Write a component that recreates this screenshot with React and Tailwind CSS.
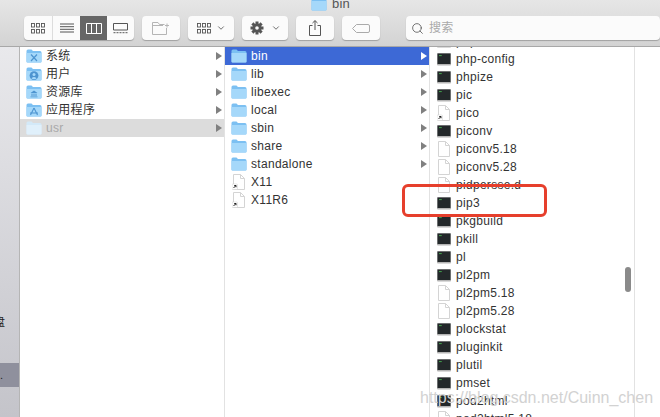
import { ChevronDown, Search } from "lucide-react";

const FONT = "font-['Liberation_Sans','Noto_Sans_CJK_SC',sans-serif]";

function Folder({ light, badge }) {
  const a = light ? "#d3e9f8" : "#7cc0f2";
  const b = light ? "#e0f0fb" : "#a5d8fa";
  return (
    <svg width="16" height="14" viewBox="0 0 16 14" className="shrink-0">
      <path d="M0.5 2 Q0.5 0.5 2 0.5 H5.5 L7 2 H14 Q15.5 2 15.5 3.5 V12.5 Q15.5 13.5 14.5 13.5 H1.5 Q0.5 13.5 0.5 12.5 Z" fill={a} />
      <path d="M0.5 4 H15.5 V12.5 Q15.5 13.5 14.5 13.5 H1.5 Q0.5 13.5 0.5 12.5 Z" fill={b} />
      {badge === "x" && <path d="M5 5.5 L11 12 M11 5.5 L5 12" stroke="#4d94d0" strokeWidth="1.2" />}
      {badge === "user" && (
        <g fill="#4d94d0">
          <circle cx="8" cy="8.6" r="4.4" />
          <circle cx="8" cy="7.4" r="1.5" fill={b} />
          <path d="M5.4 11.4 Q8 8.6 10.6 11.4 Q8 13 5.4 11.4Z" fill={b} />
        </g>
      )}
      {badge === "lib" && <path d="M4.5 8 L8 5.5 L11.5 8 Z M5.5 8.6 H6.5 V11 H5.5 Z M7.5 8.6 H8.5 V11 H7.5 Z M9.5 8.6 H10.5 V11 H9.5 Z M4.5 11.4 H11.5 V12.2 H4.5 Z" fill="#4d94d0" />}
      {badge === "app" && <path d="M8 5 L4.5 12 M8 5 L11.5 12 M4 10 H12" stroke="#4d94d0" strokeWidth="1.1" fill="none" />}
    </svg>
  );
}

function Term() {
  return (
    <svg width="14" height="14" viewBox="0 0 14 14" className="shrink-0">
      <rect x="0" y="1" width="14" height="12.5" rx="1" fill="#b4b4b4" />
      <rect x="0.5" y="1.5" width="13" height="10.5" fill="#23282a" />
      <path d="M2 3.6 H5" stroke="#4fd35a" strokeWidth="0.9" strokeDasharray="0.8 0.4" />
    </svg>
  );
}

function Doc({ alias }) {
  return (
    <svg width="14" height="16" viewBox="0 0 14 16" className="shrink-0">
      <path d="M1.5 0.5 H8.5 L12.5 4.5 V15.5 H1.5 Z" fill="#fff" stroke="#d4d4d4" />
      <path d="M8.5 0.5 V4.5 H12.5" fill="none" stroke="#d4d4d4" />
      {alias && (
        <g>
          <rect x="0" y="10" width="5.5" height="5.5" rx="0.8" fill="#fff" stroke="#ccc" strokeWidth="0.5" />
          <path d="M1.5 14 L3.8 11.7 M2.2 11.5 H4 V13.3" stroke="#111" strokeWidth="0.9" fill="none" />
        </g>
      )}
    </svg>
  );
}

function Arrow({ white }) {
  return (
    <svg width="6" height="8" viewBox="0 0 6 8" className="shrink-0">
      <path d="M0 0 L6 4 L0 8 Z" fill={white ? "#fff" : "#808080"} />
    </svg>
  );
}

function ToolBtn({ className, children }) {
  return (
    <div className={`h-[24px] flex items-center justify-center rounded-[4px] bg-[#fbfbfb] shadow-[0_1px_1px_rgba(0,0,0,0.25)] ${className}`}>
      {children}
    </div>
  );
}

function GridIcon({ color = "#555" }) {
  return (
    <svg width="14" height="11" viewBox="0 0 14 11">
      <g fill="none" stroke={color} strokeWidth="0.9">
        {[0.5, 5.5, 10.5].map((x) => (
          <g key={x}>
            <rect x={x} y="0.5" width="3" height="3.5" />
            <rect x={x} y="6.5" width="3" height="3.5" />
          </g>
        ))}
      </g>
    </svg>
  );
}

const col1 = [
  { name: "系统", badge: "x" },
  { name: "用户", badge: "user" },
  { name: "资源库", badge: "lib" },
  { name: "应用程序", badge: "app" },
];

const col2 = ["lib", "libexec", "local", "sbin", "share", "standalone"];

const col3 = [
  ["php", "term"],
  ["php-config", "term"],
  ["phpize", "term"],
  ["pic", "term"],
  ["pico", "alias"],
  ["piconv", "term"],
  ["piconv5.18", "doc"],
  ["piconv5.28", "doc"],
  ["pidpersse.d", "doc"],
  ["pip3", "term"],
  ["pkgbuild", "term"],
  ["pkill", "term"],
  ["pl", "term"],
  ["pl2pm", "term"],
  ["pl2pm5.18", "doc"],
  ["pl2pm5.28", "doc"],
  ["plockstat", "term"],
  ["pluginkit", "term"],
  ["plutil", "term"],
  ["pmset", "term"],
  ["pod2html", "term"],
  ["pod2html5.18", "doc"],
];

export default function App() {
  return (
    <div className={`relative w-[660px] h-[417px] overflow-hidden bg-white text-[12px] tracking-[0.3px] text-[#333] ${FONT}`}>
      {/* Toolbar */}
      <header className="h-[47px] border-b border-[#a8a8a8] bg-gradient-to-b from-[#e6e6e6] to-[#d3d3d3]">
        <div className="h-[16px] flex justify-center items-center gap-[5px] pl-[1px] -translate-y-[4px] text-[13px] text-[#555]">
          <Folder />
          <span>bin</span>
        </div>
        <div className="flex items-center pl-[24px]">
          <ToolBtn className="w-[110px] overflow-hidden">
            <div className="w-[29px] h-full flex items-center justify-center border-r border-[#ddd]"><GridIcon /></div>
            <div className="w-[27px] h-full flex items-center justify-center">
              <svg width="14" height="10" viewBox="0 0 14 10"><path d="M0 1 H14 M0 3.7 H14 M0 6.3 H14 M0 9 H14" stroke="#555" /></svg>
            </div>
            <div className="w-[27px] h-full flex items-center justify-center bg-[#666]">
              <svg width="16" height="11" viewBox="0 0 16 11"><path d="M0.5 0.5 H15.5 V10.5 H0.5 Z M5.5 0.5 V10.5 M10.5 0.5 V10.5" stroke="#fff" fill="none" /></svg>
            </div>
            <div className="w-[27px] h-full flex items-center justify-center">
              <svg width="15" height="11" viewBox="0 0 15 11"><path d="M0.5 0.5 H14.5 V7 H0.5 Z" stroke="#555" fill="none" /><path d="M0.5 9.7 H14.5" stroke="#555" strokeDasharray="2 1" /></svg>
            </div>
          </ToolBtn>
          <ToolBtn className="w-[38px] ml-[8px]">
            <svg width="18" height="13" viewBox="0 0 18 13"><path d="M0.5 12.5 V0.5 H6 L7.5 2.5 H12.5 M0.5 12.5 H14.5 V6 M0.5 3.5 H11 M13 3.5 H17 M15 1.5 V5.5" stroke="#b5b5b5" fill="none" /></svg>
          </ToolBtn>
          <ToolBtn className="w-[46px] ml-[8px] gap-[5px]">
            <GridIcon />
            <ChevronDown size={10} strokeWidth={2} color="#555" />
          </ToolBtn>
          <ToolBtn className="w-[46px] ml-[8px] gap-[7px]">
            <svg width="14" height="14" viewBox="0 0 14 14">
              <g fill="#555">
                {[0, 45, 90, 135].map((r) => (
                  <rect key={r} x="5.5" y="0.5" width="3" height="13" transform={`rotate(${r} 7 7)`} />
                ))}
              </g>
              <circle cx="7" cy="7" r="4.6" fill="#555" />
              <circle cx="7" cy="7" r="1.8" fill="#fbfbfb" />
            </svg>
            <ChevronDown size={10} strokeWidth={2} color="#555" />
          </ToolBtn>
          <ToolBtn className="w-[38px] ml-[8px]">
            <svg width="12" height="16" viewBox="0 0 12 16"><path d="M3.5 5.5 H0.5 V15.5 H11.5 V5.5 H8.5 M6 10 V0.8 M3.5 3 L6 0.6 L8.5 3" stroke="#555" fill="none" /></svg>
          </ToolBtn>
          <ToolBtn className="w-[38px] ml-[8px]">
            <svg width="18" height="9" viewBox="0 0 18 9"><path d="M4.5 0.5 H16 Q17.5 0.5 17.5 2 V7 Q17.5 8.5 16 8.5 H4.5 L0.5 4.5 Z" stroke="#aaa" fill="none" /></svg>
          </ToolBtn>
          <ToolBtn className="flex-1 ml-[26px] !justify-start pl-[5px] gap-[5px] text-[#aaa] text-[12px]">
            <Search size={13} strokeWidth={1.5} color="#555" />
            <span>搜索</span>
          </ToolBtn>
        </div>
      </header>

      <div className="flex h-[370px]">
        {/* Sidebar */}
        <aside className="w-[20px] shrink-0 flex flex-col border-r border-[#b5b5b5] bg-gradient-to-b from-[#e9e9ec] to-[#c4c4ca] text-[11px] text-[#222]">
          <div className="h-[316px] flex items-end pb-[34px] overflow-hidden">
            <span className="shrink-0 leading-[14px] -ml-[6px]">盘</span>
          </div>
          <div className="h-[24px] bg-[#8f909d] flex items-center pl-[0px] leading-none">.</div>
        </aside>

        {/* usr parent column */}
        <section className="w-[205px] shrink-0 border-r border-[#e2e2e2]">
          {col1.map((r) => (
            <div key={r.name} className="h-[18px] flex items-center pl-[6px] pr-[2px] gap-[4px]">
              <Folder badge={r.badge} />
              <span className="flex-1">{r.name}</span>
              <Arrow />
            </div>
          ))}
          <div className="h-[18px] flex items-center pl-[6px] pr-[2px] gap-[4px] bg-[#dcdcdc] text-[#a9a9a9]">
            <Folder light />
            <span className="flex-1">usr</span>
            <Arrow />
          </div>
        </section>

        {/* usr contents */}
        <section className="w-[205px] shrink-0 border-r border-[#e2e2e2]">
          <div className="h-[18px] flex items-center pl-[6px] pr-[2px] gap-[4px] bg-[#3d69d6] text-white">
            <Folder />
            <span className="flex-1">bin</span>
            <Arrow white />
          </div>
          {col2.map((n) => (
            <div key={n} className="h-[18px] flex items-center pl-[6px] pr-[2px] gap-[4px]">
              <Folder />
              <span className="flex-1">{n}</span>
              <Arrow />
            </div>
          ))}
          {["X11", "X11R6"].map((n) => (
            <div key={n} className="h-[18px] flex items-center pl-[7px] gap-[5px]">
              <Doc alias />
              <span>{n}</span>
            </div>
          ))}
        </section>

        {/* bin contents */}
        <section className="relative w-[205px] shrink-0 border-r border-[#e2e2e2] overflow-hidden">
          <div className="-mt-[15px]">
            {col3.map(([n, kind]) => (
              <div key={n} className="h-[18px] flex items-center pl-[7px] gap-[5px]">
                {kind === "term" ? <Term /> : <Doc alias={kind === "alias"} />}
                <span>{n}</span>
              </div>
            ))}
          </div>
          <div className="absolute left-[195px] top-[220px] w-[6px] h-[25px] rounded-full bg-[#8a8a8a]" />
        </section>

        <div className="flex-1" />
      </div>

      {/* Annotation */}
      <div className="absolute left-[402px] top-[184px] w-[145px] h-[33px] rounded-[6px] border-[3px] border-[#e63f2c]" />

      {/* Watermark */}
      <div className="absolute left-[420px] top-[389px] text-[16px] tracking-normal leading-[18px] text-[#d2d2d2]">
        https://blog.csdn.net/Cuinn_chen
      </div>
    </div>
  );
}
